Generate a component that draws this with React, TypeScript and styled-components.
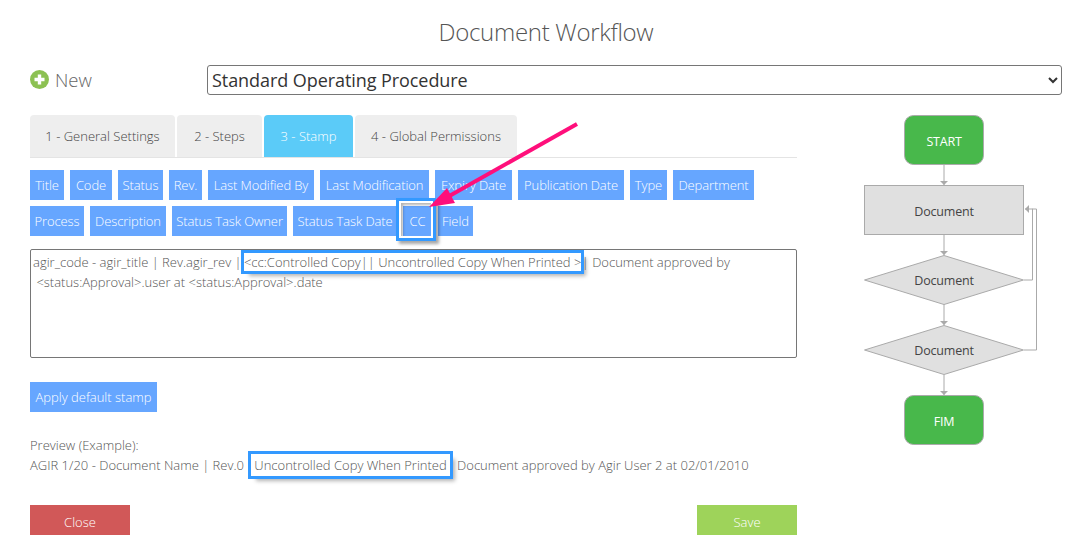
import React from 'react';
import styled, { createGlobalStyle } from 'styled-components';

const GlobalStyle = createGlobalStyle`
  html, body {
    margin: 0;
    padding: 0;
    background: #fff;
    font-family: 'Open Sans', 'Liberation Sans', sans-serif;
    font-weight: 300;
    color: #444;
    overflow: hidden;
  }
`;

const Page = styled.div`
  position: relative;
  width: 1092px;
  height: 547px;
  padding-left: 30px;
  box-sizing: border-box;
`;

const Title = styled.h1`
  width: 1032px;
  margin: 0;
  padding-top: 16px;
  height: 65px;
  box-sizing: border-box;
  text-align: center;
  font-size: 24px;
  line-height: 32px;
  font-weight: 300;
  letter-spacing: -0.3px;
  color: #555;
`;

const Header = styled.div`
  display: flex;
  align-items: center;
  height: 30px;
`;

const NewLink = styled.div`
  display: flex;
  align-items: center;
  gap: 6px;
  width: 177px;
  height: 30px;
  margin-top: -2px;
  font-size: 18.5px;
  color: #666;
`;

const DocSelect = styled.select`
  width: 855px;
  height: 30px;
  padding: 0;
  border: 1px solid #767676;
  border-radius: 3px;
  background: #fff;
  font-family: 'Open Sans', sans-serif;
  font-weight: 400;
  font-size: 18px;
  letter-spacing: -0.07px;
  color: #333;
`;

const Body = styled.div`
  display: flex;
  margin-top: 20px;
`;

const Main = styled.div`
  flex: none;
  width: 767px;
`;

const Tabs = styled.div`
  display: flex;
  gap: 2px;
  height: 42px;
  border-bottom: 1px solid #e4e4e4;
`;

const Tab = styled.div<{ $w: number; $active?: boolean }>`
  width: ${(p) => p.$w}px;
  height: 42px;
  border-radius: 4px 4px 0 0;
  background: ${(p) => (p.$active ? '#5bcbf8' : '#eeeeee')};
  color: ${(p) => (p.$active ? '#fff' : '#444')};
  font-size: 13px;
  line-height: 42px;
  text-align: center;
`;

const Tags = styled.div`
  display: flex;
  flex-wrap: wrap;
  gap: 6px;
  margin-top: 12px;
`;

const Tag = styled.div<{ $w: number }>`
  position: relative;
  width: ${(p) => p.$w}px;
  height: 30px;
  background: #66a6ff;
  color: #fff;
  font-size: 13px;
  letter-spacing: -0.1px;
  line-height: 30px;
  text-align: center;
  white-space: nowrap;
`;

const TagHighlight = styled.div`
  position: absolute;
  z-index: 1;
  left: -7px;
  top: -8px;
  right: -4px;
  bottom: -5px;
  border: 3px solid #3399ff;
  box-shadow: 3px 3px 3px rgba(0, 0, 0, 0.35), inset 0 0 0 2px #fff, inset 3px 3px 3px 1px rgba(0, 0, 0, 0.3);
`;

const StampBox = styled.div`
  margin-top: 13px;
  height: 109px;
  box-sizing: border-box;
  border: 1px solid #767676;
  border-radius: 2px;
  padding: 2px 2px;
  font-size: 13px;
  line-height: 20px;
  color: #555;
  white-space: nowrap;
`;

const Marked = styled.span`
  outline: 3px solid #3399ff;
  box-shadow: 5px 5px 4px rgba(0, 0, 0, 0.3);
`;

const StampMark = styled(Marked)`
  margin-left: -1px;
  margin-right: -3px;
`;

const PreviewMark = styled(Marked)`
  margin: 0 4px;
  padding: 2px 3px;
`;

const ApplyButton = styled.div`
  width: 127px;
  height: 30px;
  margin-top: 24px;
  background: #66a6ff;
  color: #fff;
  font-size: 13px;
  line-height: 30px;
  text-align: center;
`;

const Preview = styled.div`
  margin-top: 23px;
  font-size: 13px;
  line-height: 20px;
  color: #555;
  white-space: nowrap;
`;

const Footer = styled.div`
  display: flex;
  justify-content: space-between;
  margin-top: 30px;
`;

const FooterButton = styled.div<{ $bg: string }>`
  width: 100px;
  height: 30px;
  background: ${(p) => p.$bg};
  color: #fff;
  font-size: 13px;
  line-height: 34px;
  text-align: center;
`;

const Flow = styled.svg`
  display: block;
  flex: none;
  font-family: 'Open Sans', sans-serif;
  font-weight: 400;
`;

const Arrow = styled.svg`
  position: absolute;
  z-index: 2;
  left: 0;
  top: 0;
  pointer-events: none;
`;

const tagList: [string, number][] = [
  ['Title', 34],
  ['Code', 42],
  ['Status', 45],
  ['Rev.', 33],
  ['Last Modified By', 106],
  ['Last Modification', 109],
  ['Expiry Date', 77],
  ['Publication Date', 106],
  ['Type', 37],
  ['Department', 81],
  ['Process', 54],
  ['Description', 76],
  ['Status Task Owner', 115],
  ['Status Task Date', 104],
  ['CC', 29],
  ['Field', 35],
];

const Connector = ({ d }: { d: string }) => <path d={d} fill="none" stroke="#aaa" strokeWidth="1" />;

const FlowNodeText = ({ x, y, fill, children }: { x: number; y: number; fill: string; children: string }) => (
  <text x={x} y={y} fill={fill} fontSize="12.5" letterSpacing="-0.2" textAnchor="middle">
    {children}
  </text>
);

const App = () => {
  return (
    <Page>
      <GlobalStyle />
      <Title>Document Workflow</Title>
      <Header>
        <NewLink>
          <svg width="19" height="19" viewBox="0 0 19 19">
            <circle cx="9.5" cy="9.5" r="9.5" fill="#8cc152" />
            <path d="M9.5 4.5v10M4.5 9.5h10" stroke="#fff" strokeWidth="3.4" />
          </svg>
          New
        </NewLink>
        <DocSelect defaultValue="sop">
          <option value="sop">Standard Operating Procedure</option>
        </DocSelect>
      </Header>
      <Body>
        <Main>
          <Tabs>
            <Tab $w={145}>1 - General Settings</Tab>
            <Tab $w={85}>2 - Steps</Tab>
            <Tab $w={89} $active>3 - Stamp</Tab>
            <Tab $w={162}>4 - Global Permissions</Tab>
          </Tabs>
          <Tags>
            {tagList.map(([label, w]) => (
              <Tag key={label} $w={w}>
                {label}
                {label === 'CC' && <TagHighlight />}
              </Tag>
            ))}
          </Tags>
          <StampBox>
            agir_code - agir_title | Rev.agir_rev | <StampMark>&lt;cc:Controlled Copy|| Uncontrolled Copy When Printed &gt;</StampMark> | Document approved by
            <br />
            &nbsp;&lt;status:Approval&gt;.user at &lt;status:Approval&gt;.date
          </StampBox>
          <ApplyButton>Apply default stamp</ApplyButton>
          <Preview>
            Preview (Example):
            <br />
            AGIR 1/20 - Document Name | Rev.0 <PreviewMark>Uncontrolled Copy When Printed</PreviewMark> Document approved by Agir User 2 at 02/01/2010
          </Preview>
          <Footer>
            <FooterButton $bg="#d15858">Close</FooterButton>
            <FooterButton $bg="#9ed35a">Save</FooterButton>
          </Footer>
        </Main>
        <Flow width="295" height="335" viewBox="797 115 295 335">
          <Connector d="M944 164V185M944 234V255M944 304V325M944 375V395M1024 280H1032.5V209H1025M1024 350H1036.5V209H1032" />
          <path d="M940 181h8l-4 4zM940 251h8l-4 4zM940 321h8l-4 4zM940 391h8l-4 4zM1029 205v8l-4-4z" fill="#aaa" />
          <rect x="904.5" y="115.5" width="79" height="49" rx="9" fill="#48b84b" stroke="#aaa" />
          <rect x="864.5" y="185.5" width="159" height="49" fill="#e0e0e0" stroke="#aaa" />
          <polygon points="944,255.5 1023.5,280 944,304.5 864.5,280" fill="#e0e0e0" stroke="#aaa" />
          <polygon points="944,325.5 1023.5,350 944,374.5 864.5,350" fill="#e0e0e0" stroke="#aaa" />
          <rect x="904.5" y="395.5" width="79" height="49" rx="9" fill="#48b84b" stroke="#aaa" />
          <FlowNodeText x={944} y={146} fill="#fff">START</FlowNodeText>
          <FlowNodeText x={944} y={216} fill="#444">Document</FlowNodeText>
          <FlowNodeText x={944} y={285} fill="#444">Document</FlowNodeText>
          <FlowNodeText x={944} y={355} fill="#444">Document</FlowNodeText>
          <FlowNodeText x={944} y={426} fill="#fff">FIM</FlowNodeText>
        </Flow>
      </Body>
      <Arrow width="1092" height="547" viewBox="0 0 1092 547">
        <path d="M577 124L444 199" stroke="#ff0f7b" strokeWidth="4" fill="none" />
        <polygon points="429,207 447,188 455,203" fill="#ff0f7b" />
      </Arrow>
    </Page>
  );
};

export default App;
